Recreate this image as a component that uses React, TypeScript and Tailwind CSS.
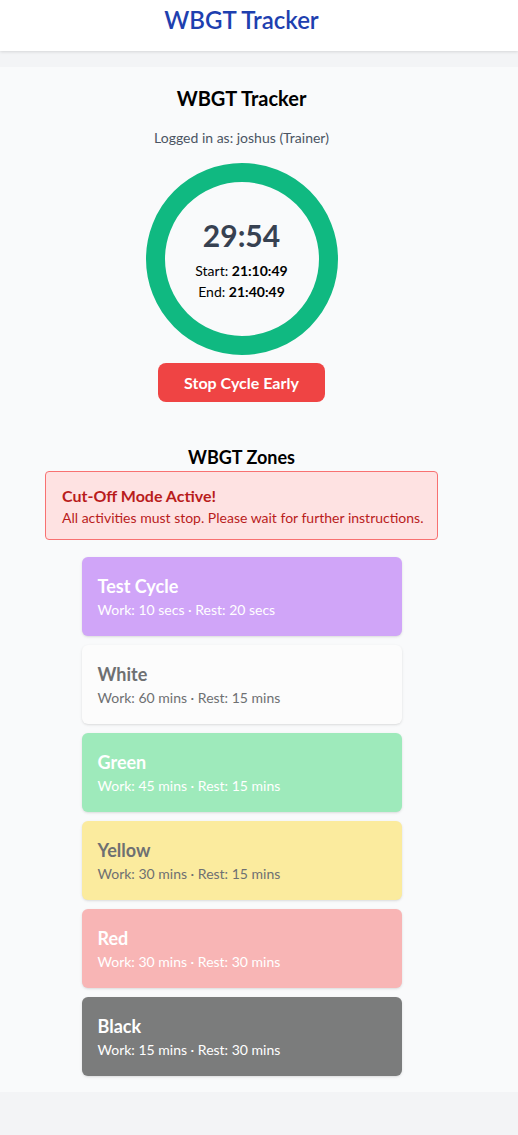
import React from 'react';

type Zone = {
  name: string;
  work: string;
  rest: string;
  bg: string;
  text: string;
};

const zones: Zone[] = [
  { name: 'Test Cycle', work: '10 secs', rest: '20 secs', bg: 'bg-[#d0a5f8]', text: 'text-white' },
  { name: 'White', work: '60 mins', rest: '15 mins', bg: 'bg-[#fcfcfc]', text: 'text-[#6e7072]' },
  { name: 'Green', work: '45 mins', rest: '15 mins', bg: 'bg-[#9eeabb]', text: 'text-white' },
  { name: 'Yellow', work: '30 mins', rest: '15 mins', bg: 'bg-[#fbeb9e]', text: 'text-[#6e7072]' },
  { name: 'Red', work: '30 mins', rest: '30 mins', bg: 'bg-[#f8b5b5]', text: 'text-white' },
  { name: 'Black', work: '15 mins', rest: '30 mins', bg: 'bg-[#7b7c7c]', text: 'text-white' },
];

const ZoneCard: React.FC<{ zone: Zone }> = ({ zone }) => {
  return (
    <div className={`${zone.bg} ${zone.text} h-[79px] rounded-md px-4 pt-[1px] flex flex-col justify-center shadow-sm`}>
      <h4 className="text-lg font-bold leading-6">{zone.name}</h4>
      <p className="text-sm leading-5 mt-[2px]">
        Work: {zone.work} · Rest: {zone.rest}
      </p>
    </div>
  );
};

const App: React.FC = () => {
  return (
    <div className="min-h-screen bg-[#f3f4f6] font-['Lato',sans-serif]">
      <header className="bg-white h-[51px] shadow-[0_1px_3px_rgba(0,0,0,0.12)] pt-[4px]">
        <h1 className="w-[483px] text-center text-2xl leading-8 font-semibold text-[#1e40af]">WBGT Tracker</h1>
      </header>

      <main className="mt-4 bg-[#f9fafb] pb-4">
        <div className="w-[483px] flex flex-col items-center pt-[17px]">
          <h2 className="text-xl font-bold text-black leading-7">WBGT Tracker</h2>
          <p className="text-sm text-[#4b5563] mt-[16px]">Logged in as: joshus (Trainer)</p>

          <div className="mt-[15px] w-[192px] h-[192px] rounded-full border-[19px] border-[#10b981] flex flex-col items-center justify-center">
            <div className="text-[30px] font-bold text-[#374151] leading-9">29:54</div>
            <div className="text-sm text-black mt-[7px] leading-[21px]">
              Start: <span className="font-bold">21:10:49</span>
            </div>
            <div className="text-sm text-black leading-[21px]">
              End: <span className="font-bold">21:40:49</span>
            </div>
          </div>

          <button className="mt-[8px] w-[167px] h-[39px] bg-[#ef4444] rounded-lg text-white font-bold text-base">
            Stop Cycle Early
          </button>

          <h3 className="mt-[43px] text-lg font-bold text-black leading-6">WBGT Zones</h3>

          <div className="mt-[2px] w-[393px] h-[69px] bg-[#fee2e2] border border-[#f87171] rounded px-4 flex flex-col justify-center text-[#b91c1c]">
            <p className="font-bold text-base leading-6">Cut-Off Mode Active!</p>
            <p className="text-sm leading-5 whitespace-nowrap">All activities must stop. Please wait for further instructions.</p>
          </div>

          <div className="mt-[17px] w-[320px] flex flex-col gap-[9px]">
            {zones.map((z) => (
              <ZoneCard key={z.name} zone={z} />
            ))}
          </div>
        </div>
      </main>
    </div>
  );
};

export default App;
